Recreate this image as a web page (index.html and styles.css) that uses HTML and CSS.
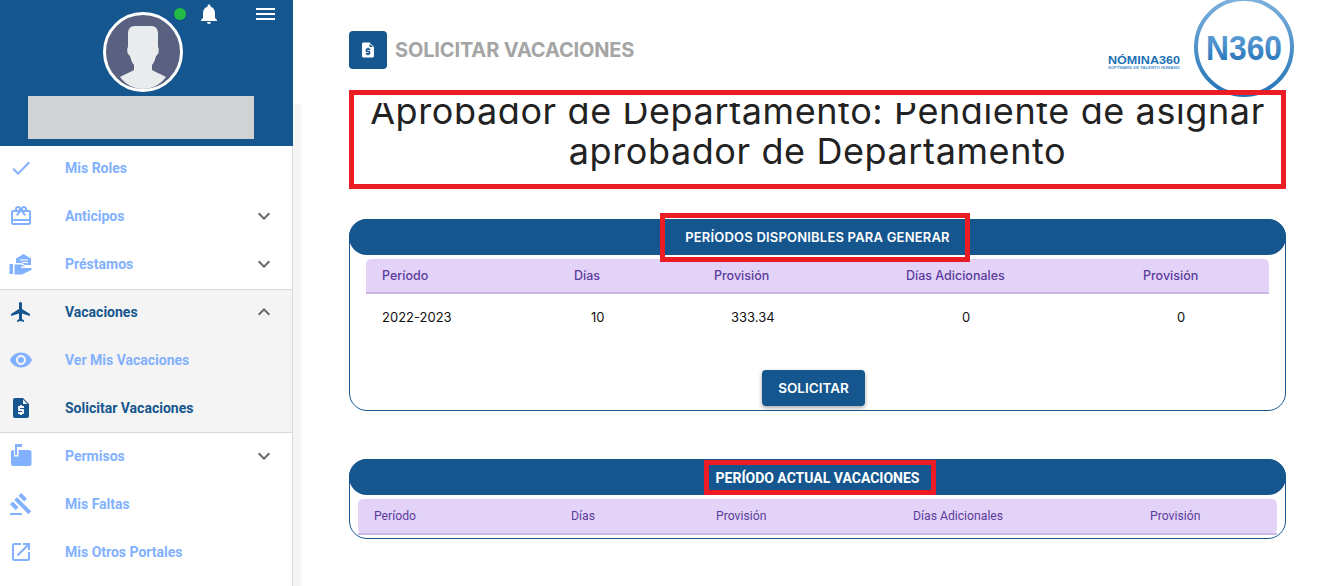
FILE: index.html
```html
<!DOCTYPE html>
<html lang="es">
<head>
    <meta charset="UTF-8">
    <meta name="viewport" content="width=device-width, initial-scale=1.0">
    <title>Solicitar Vacaciones</title>
    <link rel="stylesheet" href="styles.css">
</head>
<body>
    <div class="page">
        <aside class="sidebar">
            <div class="profile">
                <span class="status-dot"></span>
                <svg class="bell" viewBox="0 0 24 24"><path d="M12 22c1.100 0 2-.9 2-2h-4c0 1.100.89 2 2 2zm6-6v-5c0-3.070-1.640-5.640-4.500-6.320V4c0-.83-.67-1.500-1.500-1.500s-1.500.67-1.500 1.500v.68C7.630 5.360 6 7.920 6 11v5l-2 2v1h16v-1l-2-2z"/></svg>
                <div class="burger"><span></span><span></span><span></span></div>
                <svg class="avatar" viewBox="0 0 80 80">
                    <circle cx="40" cy="40" r="38.500" fill="#5a6080" stroke="#fff" stroke-width="3"/>
                    <path d="M32 14h16c5 0 7 3 7 8v13c1 1 1 5 0 7-1 1-1 1-2 2-1 4-2 7-4 9v5c3 2 9 4 14 7-6 8-14 12-23 12s-17-4-23-12c5-3 11-5 14-7v-5c-2-2-3-5-4-9-1-1-1-1-2-2-1-2-1-6 0-7V22c0-5 2-8 7-8z" fill="#e8eced"/>
                </svg>
                <div class="user-box"></div>
            </div>
            <nav class="menu">
                <a class="menu-row">
                    <svg class="menu-icon" viewBox="0 0 24 24"><path d="M21 7 9 19l-5.500-5.500 1.410-1.410L9 16.170 19.590 5.590 21 7z"/></svg>
                    <span>Mis Roles</span>
                </a>
                <a class="menu-row">
                    <svg class="menu-icon" viewBox="0 0 24 24"><path d="M20 6h-2.180c.11-.31.18-.65.18-1 0-1.660-1.340-3-3-3-1.050 0-1.960.54-2.500 1.350l-.5.67-.5-.68C10.960 2.540 10.050 2 9 2 7.340 2 6 3.340 6 5c0 .35.07.69.18 1H4c-1.110 0-1.990.89-1.990 2L2 19c0 1.110.89 2 2 2h16c1.110 0 2-.89 2-2V8c0-1.110-.89-2-2-2zm-5-2c.55 0 1 .45 1 1s-.45 1-1 1-1-.45-1-1 .45-1 1-1zM9 4c.55 0 1 .45 1 1s-.45 1-1 1-1-.45-1-1 .45-1 1-1zm11 15H4v-2h16v2zm0-4H4V8h5.080L7 10.830 8.620 12 12 7.400 15.380 12 17 10.830 14.920 8H20v7z"/></svg>
                    <span>Anticipos</span>
                    <svg class="chevron" viewBox="0 0 24 24"><path d="M7.410 8.590 12 13.170l4.590-4.580L18 10l-6 6-6-6 1.410-1.410z"/></svg>
                </a>
                <a class="menu-row">
                    <svg class="menu-icon" viewBox="0 0 24 24">
                        <path d="M.5 12H4v10H.5zM14.500 2 22 6.500V13h-6.500c-1-1.500-3-2-5-2H7V6.500zM5.500 12.500h5c2 0 4 .5 5 2H12V16h10.500c.5 1.200 0 2-1 2.500L13 22.500H5.500z"/>
                        <path class="icon-slit" d="M11 7.500h8v1h-8zM13 10h6v1h-6z"/>
                    </svg>
                    <span>Préstamos</span>
                    <svg class="chevron" viewBox="0 0 24 24"><path d="M7.410 8.590 12 13.170l4.590-4.580L18 10l-6 6-6-6 1.410-1.410z"/></svg>
                </a>
                <div class="menu-group">
                    <a class="menu-row active">
                        <svg class="menu-icon" viewBox="0 0 24 24"><path d="M21 16v-2l-8-5V3.500c0-.83-.67-1.500-1.500-1.500S10 2.670 10 3.500V9l-8 5v2l8-2.500V19l-2 1.500V22l3.500-1 3.500 1v-1.500L13 19v-5.500l8 2.500z"/></svg>
                        <span>Vacaciones</span>
                        <svg class="chevron" viewBox="0 0 24 24"><path d="M7.410 15.410 12 10.830l4.590 4.580L18 14l-6-6-6 6 1.410 1.410z"/></svg>
                    </a>
                    <a class="menu-row">
                        <svg class="menu-icon" viewBox="0 0 24 24"><path d="M12 4.500C7 4.500 2.730 7.610 1 12c1.730 4.390 6 7.500 11 7.500s9.270-3.110 11-7.500c-1.730-4.390-6-7.500-11-7.500zM12 17c-2.760 0-5-2.240-5-5s2.240-5 5-5 5 2.240 5 5-2.240 5-5 5zm0-8c-1.660 0-3 1.340-3 3s1.340 3 3 3 3-1.340 3-3-1.340-3-3-3z"/></svg>
                        <span>Ver Mis Vacaciones</span>
                    </a>
                    <a class="menu-row active">
                        <svg class="menu-icon" viewBox="0 0 24 24"><path d="M14 2H6c-1.100 0-1.990.9-1.990 2L4 20c0 1.100.89 2 1.990 2H18c1.100 0 2-.9 2-2V8l-6-6zm1 10h-4v1h3c.55 0 1 .45 1 1v3c0 .55-.45 1-1 1h-1v1h-2v-1H9v-2h4v-1h-3c-.55 0-1-.45-1-1v-3c0-.55.45-1 1-1h1V9h2v1h2v2zm-1-4V3.500L18.500 8H14z"/></svg>
                        <span>Solicitar Vacaciones</span>
                    </a>
                </div>
                <a class="menu-row">
                    <svg class="menu-icon" viewBox="0 0 24 24"><path d="M6 0h7v3H8v8H6zM4 6h1v6.500h4.500V6h11c1 0 2 1 2 2v12c0 1-1 2-2 2H4c-1 0-2-1-2-2V8c0-1 1-2 2-2z"/></svg>
                    <span>Permisos</span>
                    <svg class="chevron" viewBox="0 0 24 24"><path d="M7.410 8.590 12 13.170l4.590-4.580L18 10l-6 6-6-6 1.410-1.410z"/></svg>
                </a>
                <a class="menu-row">
                    <svg class="menu-icon" viewBox="0 0 24 24"><path d="M1 21h12v2H1v-2zM5.245 8.070l2.830-2.827 14.140 14.142-2.828 2.828L5.245 8.070zM12.317 1l5.657 5.656-2.830 2.830-5.654-5.660L12.317 1zM3.825 9.485l5.657 5.657-2.828 2.828-5.657-5.657 2.828-2.828z"/></svg>
                    <span>Mis Faltas</span>
                </a>
                <a class="menu-row">
                    <svg class="menu-icon" viewBox="0 0 24 24"><path d="M19 19H5V5h7V3H5c-1.110 0-2 .9-2 2v14c0 1.100.89 2 2 2h14c1.100 0 2-.9 2-2v-7h-2v7zM14 3v2h3.590l-9.830 9.830 1.410 1.410L19 6.410V10h2V3h-7z"/></svg>
                    <span>Mis Otros Portales</span>
                </a>
            </nav>
        </aside>

        <main class="main">
            <header class="topbar">
                <div class="topbar-icon">
                    <svg viewBox="0 0 24 24"><path d="M14 2H6c-1.100 0-1.990.9-1.990 2L4 20c0 1.100.89 2 1.990 2H18c1.100 0 2-.9 2-2V8l-6-6zm1 10h-4v1h3c.55 0 1 .45 1 1v3c0 .55-.45 1-1 1h-1v1h-2v-1H9v-2h4v-1h-3c-.55 0-1-.45-1-1v-3c0-.55.45-1 1-1h1V9h2v1h2v2zm-1-4V3.500L18.500 8H14z"/></svg>
                </div>
                <h2 class="topbar-title">SOLICITAR VACACIONES</h2>
                <svg class="logo-text" viewBox="0 0 72 17">
                    <text x="0" y="10.500" textLength="72" lengthAdjust="spacingAndGlyphs" class="logo-name">NÓMINA360</text>
                    <text x="0" y="16.200" textLength="72" lengthAdjust="spacingAndGlyphs" class="logo-sub">SOFTWARE DE TALENTO HUMANO</text>
                </svg>
                <svg class="logo-circle" viewBox="0 0 100 100">
                    <defs>
                        <linearGradient id="logoGrad" x1="0" y1="0" x2="0" y2="1">
                            <stop offset="0" stop-color="#7fb1dc"/>
                            <stop offset="1" stop-color="#2273b8"/>
                        </linearGradient>
                        <linearGradient id="markGrad" x1="0" y1="0" x2="0" y2="1">
                            <stop offset="0" stop-color="#6aa7dc"/>
                            <stop offset="1" stop-color="#1f6fb5"/>
                        </linearGradient>
                    </defs>
                    <circle cx="50" cy="50" r="48" fill="#fff" stroke="url(#logoGrad)" stroke-width="4"/>
                    <text x="12" y="63" textLength="76" lengthAdjust="spacingAndGlyphs" class="logo-mark" fill="url(#markGrad)">N360</text>
                </svg>
            </header>

            <div class="notice">
                <h1>Aprobador de Departamento: Pendiente de asignar aprobador de Departamento</h1>
            </div>

            <section class="card">
                <div class="card-title poppins"><span class="marked">PERÍODOS DISPONIBLES PARA GENERAR</span></div>
                <div class="card-body">
                    <table class="data-table">
                        <thead>
                            <tr><th>Período</th><th>Días</th><th>Provisión</th><th>Días Adicionales</th><th>Provisión</th></tr>
                        </thead>
                        <tbody>
                            <tr><td>2022-2023</td><td>10</td><td>333.34</td><td>0</td><td>0</td></tr>
                        </tbody>
                    </table>
                    <div class="actions"><button type="button">SOLICITAR</button></div>
                </div>
            </section>

            <section class="card card-current">
                <div class="card-title"><span class="marked">PERÍODO ACTUAL VACACIONES</span></div>
                <table class="data-table current-table">
                    <thead>
                        <tr><th>Período</th><th>Días</th><th>Provisión</th><th>Días Adicionales</th><th>Provisión</th></tr>
                    </thead>
                </table>
            </section>
        </main>
    </div>
</body>
</html>
```

FILE: styles.css
```css
/* General Reset */
* {
    margin: 0;
    padding: 0;
    box-sizing: border-box;
}

body {
    height: 586px;
    overflow: hidden;
    background: #fff;
    font-family: "Inter", "Liberation Sans", sans-serif;
}

.page {
    display: flex;
    height: 586px;
}

/* Sidebar */
.sidebar {
    width: 293px;
    flex-shrink: 0;
    border-right: 1px solid #dcdcdc;
    background: #fff;
    font-family: "Roboto", sans-serif;
}

.profile {
    position: relative;
    height: 146px;
    margin-right: -1px;
    background: #15568f;
    z-index: 1;
}

.status-dot {
    position: absolute;
    left: 174px;
    top: 8px;
    width: 12px;
    height: 12px;
    border-radius: 50%;
    background: #22bb44;
}

.bell {
    position: absolute;
    left: 197px;
    top: 2px;
    width: 24px;
    height: 24px;
    fill: #fff;
}

.burger {
    position: absolute;
    left: 256px;
    top: 8px;
    width: 19px;
    display: flex;
    flex-direction: column;
    gap: 3px;
}

.burger span {
    height: 2px;
    background: #fff;
}

.avatar {
    position: absolute;
    left: 103px;
    top: 12px;
    width: 80px;
    height: 80px;
}

.user-box {
    position: absolute;
    left: 28px;
    top: 96px;
    width: 226px;
    height: 43px;
    background: #d1d2d4;
}

.menu {
    margin-top: -2px;
}

.menu-row {
    display: flex;
    align-items: center;
    height: 48px;
    padding-left: 9px;
    color: #82b1ff;
    font-size: 14px;
    font-weight: 700;
}

.menu-row.active {
    color: #15568f;
}

.menu-icon {
    width: 24px;
    height: 24px;
    margin-right: 32px;
    fill: #82b1ff;
}

.menu-icon .icon-slit {
    fill: #fff;
}

.menu-row.active .menu-icon {
    fill: #15568f;
}

.chevron {
    width: 24px;
    height: 24px;
    margin-left: auto;
    margin-right: 16px;
    fill: #666;
}

.menu-group {
    display: flow-root;
    height: 144px;
    margin: 1px 0 -1px;
    background: #f4f4f4;
    box-shadow: inset 0 1px 0 #d8d8d8, inset 0 -1px 0 #d8d8d8;
}

.menu-group .menu-row:first-child {
    margin-top: -1px;
}

/* Main content */
.main {
    position: relative;
    flex: 1;
    padding: 0 50px 0 56px;
}

.main::before {
    content: "";
    position: absolute;
    left: 0;
    top: 104px;
    bottom: 0;
    width: 8px;
    background: #f5f5f5;
}

.topbar {
    position: relative;
    display: flex;
    align-items: center;
    height: 90px;
    padding-top: 10px;
}

.topbar-icon {
    display: flex;
    align-items: center;
    justify-content: center;
    width: 38px;
    height: 38px;
    border-radius: 4px;
    background: #15568f;
}

.topbar-icon svg {
    width: 18px;
    height: 18px;
    fill: #fff;
}

.topbar-title {
    margin-left: 8px;
    color: #a5a5a5;
    font-size: 20px;
    font-weight: 700;
    letter-spacing: -0.15px;
}

.logo-text {
    position: absolute;
    left: 759px;
    top: 53px;
    width: 72px;
    height: 17px;
}

.logo-name {
    font-family: "Liberation Sans", sans-serif;
    font-size: 11.500px;
    font-weight: 700;
    fill: #1c70b5;
}

.logo-sub {
    font-family: "Liberation Sans", sans-serif;
    font-size: 3.500px;
    font-weight: 700;
    fill: #4d93cc;
}

.logo-circle {
    position: absolute;
    left: 845px;
    top: -3px;
    width: 100px;
    height: 100px;
}

.logo-mark {
    font-family: "Liberation Sans", sans-serif;
    font-size: 35px;
    font-weight: 700;
}

.notice {
    position: relative;
    height: 99px;
    border: 5px solid #ec1c24;
    overflow: hidden;
    text-align: center;
}

.notice h1 {
    margin-top: -4px;
    color: #222;
    font-size: 36px;
    font-weight: 400;
    line-height: 40px;
    letter-spacing: 0.6px;
    clip-path: inset(12px 0 0 0);
}

/* Cards */
.card {
    height: 192px;
    margin-top: 30px;
    border: 1px solid #15568f;
    border-radius: 18px;
}

.card-current {
    height: 80px;
    margin-top: 48px;
    font-family: "Roboto", sans-serif;
}

.card-title {
    display: flex;
    align-items: center;
    justify-content: center;
    height: 36px;
    margin: -1px -1px 0;
    border-radius: 18px;
    background: #15568f;
    color: #fff;
    font-size: 14px;
    font-weight: 700;
}

.card-title.poppins {
    font-family: "Inter", sans-serif;
    font-size: 13px;
    font-weight: 600;
    letter-spacing: 0.2px;
}

.marked {
    position: relative;
}

.marked::after {
    content: "";
    position: absolute;
    left: -25px;
    right: -20px;
    top: -16px;
    bottom: -17px;
    border: 5px solid #ec1c24;
}

.card-current .card-title {
    padding-top: 1px;
}

.card-current .marked::after {
    left: -12px;
    right: -17px;
    top: -10px;
    bottom: -9px;
}

.card-body {
    padding: 4px 16px 0;
}

/* Tables */
.data-table {
    width: 100%;
    border-collapse: collapse;
    table-layout: fixed;
    font-size: 12.500px;
}

.data-table th {
    height: 34px;
    padding-left: 16px;
    border-bottom: 2px solid #cbb8e4;
    background: #e4d3f8;
    color: #5a3d9c;
    font-weight: 500;
    text-align: left;
}

.data-table th:first-child {
    width: 192px;
    border-top-left-radius: 5px;
}

.data-table th:nth-child(2) {
    width: 140px;
}

.data-table th:nth-child(3) {
    width: 192px;
}

.data-table th:nth-child(4) {
    width: 237px;
}

.data-table th:last-child {
    border-top-right-radius: 5px;
}

.data-table td {
    height: 46px;
    padding-left: 16px;
    color: #111;
    font-size: 13px;
}

.data-table td:nth-child(2),
.data-table td:nth-child(3) {
    padding-left: 33px;
}

.data-table td:nth-child(4) {
    padding-left: 72px;
}

.data-table td:nth-child(5) {
    padding-left: 50px;
}

.actions {
    display: flex;
    justify-content: center;
    padding: 31px 8px 0 0;
}

.actions button {
    width: 103px;
    height: 36px;
    border: none;
    border-radius: 4px;
    background: #15568f;
    color: #fff;
    font-family: "Inter", sans-serif;
    font-size: 13.500px;
    font-weight: 600;
    box-shadow: 0 2px 4px rgba(0, 0, 0, 0.35);
    cursor: pointer;
}

.current-table {
    width: 919px;
    margin: 4px 0 0 8px;
    font-size: 12.200px;
}

.current-table th {
    height: 35px;
    font-weight: 400;
}

.current-table th:first-child {
    width: 197px;
    border-bottom-left-radius: 5px;
}

.current-table th:nth-child(2) {
    width: 145px;
}

.current-table th:nth-child(3) {
    width: 197px;
}

.current-table th:last-child {
    border-bottom-right-radius: 5px;
}
```
